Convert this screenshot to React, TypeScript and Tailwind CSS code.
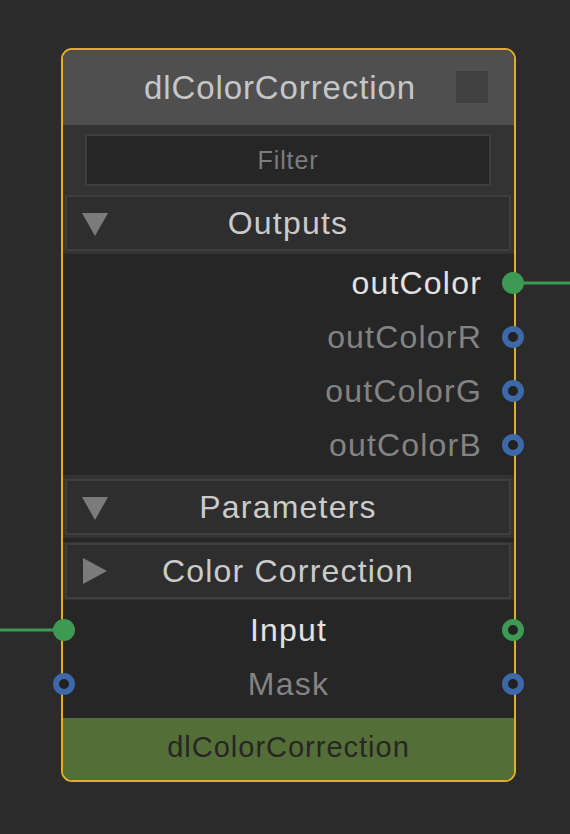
import React from "react";

type Port = "fill" | "ring-green" | "ring-blue" | null;

const FONT = { fontFamily: '"Liberation Sans", Arial, sans-serif' };

function Dot({ kind, side }: { kind: Port; side: "left" | "right" }) {
  if (!kind) return null;
  const pos = side === "left" ? "left-[-10px]" : "right-[-10px]";
  if (kind === "fill") {
    return <span className={`absolute ${pos} top-1/2 -translate-y-1/2 w-[22px] h-[22px] rounded-full bg-[#3d9a52] z-10`} />;
  }
  const ring = kind === "ring-green" ? "border-[#3d9a52]" : "border-[#3d68aa]";
  return (
    <span
      className={`absolute ${pos} top-1/2 -translate-y-1/2 w-[22px] h-[22px] rounded-full border-[6px] ${ring} bg-[#222222] z-10`}
    />
  );
}

function Section({ label, open }: { label: string; open: boolean }) {
  return (
    <div className="relative flex h-[56px] items-center justify-center border-2 border-[#3f3f3f] bg-[#2e2e2e]">
      <svg
        className="absolute left-[14px] top-1/2 -translate-y-1/2"
        width="28"
        height="28"
        viewBox="0 0 28 28"
      >
        {open ? (
          <polygon points="1,4 27,4 14,27" fill="#7b7b7b" />
        ) : (
          <polygon points="2,1 2,27 26,14" fill="#7b7b7b" />
        )}
      </svg>
      <span className="text-[32px] leading-none tracking-[1.2px] text-[#cbcbcb]">{label}</span>
    </div>
  );
}

function OutRow({ label, port, bright }: { label: string; port: Port; bright?: boolean }) {
  return (
    <div className="relative flex h-[54px] items-center justify-end pr-[32px]">
      <span className={`text-[32px] leading-none tracking-[1.2px] ${bright ? "text-[#e2e2e2]" : "text-[#838383]"}`}>
        {label}
      </span>
      {bright && <span className="absolute left-[calc(100%+8px)] top-1/2 -translate-y-1/2 h-[3px] w-[60px] bg-[#3d9a52]" />}
      <Dot kind={port} side="right" />
    </div>
  );
}

function InRow({ label, left, right, bright }: { label: string; left: Port; right: Port; bright?: boolean }) {
  return (
    <div className="relative flex h-[54px] items-center justify-center">
      <span className={`text-[32px] leading-none tracking-[1.2px] ${bright ? "text-[#e2e2e2]" : "text-[#838383]"}`}>
        {label}
      </span>
      {bright && <span className="absolute right-[calc(100%+8px)] top-1/2 -translate-y-1/2 h-[3px] w-[60px] bg-[#3d9a52]" />}
      <Dot kind={left} side="left" />
      <Dot kind={right} side="right" />
    </div>
  );
}

export default function App() {
  return (
    <div className="h-[834px] w-[570px] overflow-hidden bg-[#2b2b2b] pl-[61px] pt-[48px]" style={FONT}>
      <div className="w-[455px] rounded-[11px] border-2 border-[#e0ad2c]">
        <div className="relative flex h-[75px] items-center justify-center rounded-t-[9px] bg-[#4f4f4f] pr-[17px]">
          <span className="text-[33px] leading-none tracking-[0.9px] text-[#c6c6c6]">dlColorCorrection</span>
          <span className="absolute right-[26px] top-[21px] h-[32px] w-[32px] bg-[#414141]" />
        </div>

        <div className="h-[68px] bg-[#333333] pl-[22px] pr-[23px] pt-[9px]">
          <div className="flex h-[52px] items-center justify-center border-2 border-[#3e3e3e] bg-[#262626]">
            <span className="text-[25px] leading-none tracking-[0.9px] text-[#7c7c7c]">Filter</span>
          </div>
        </div>

        <div className="h-[61px] bg-[#333333] pl-[2px] pr-[3px] pt-[2px]">
          <Section label="Outputs" open />
        </div>

        <div className="bg-[#262626] pb-[3px] pt-[2px]">
          <OutRow label="outColor" port="fill" bright />
          <OutRow label="outColorR" port="ring-blue" />
          <OutRow label="outColorG" port="ring-blue" />
          <OutRow label="outColorB" port="ring-blue" />
        </div>

        <div className="bg-[#333333] pb-[3px] pl-[2px] pr-[3px] pt-[4px]">
          <Section label="Parameters" open />
        </div>
        <div className="h-[4px] bg-[#262626]" />
        <div className="bg-[#333333] pb-[1px] pl-[2px] pr-[3px] pt-[1px]">
          <Section label="Color Correction" open={false} />
        </div>

        <div className="bg-[#262626] pb-[7px] pt-[3px]">
          <InRow label="Input" left="fill" right="ring-green" bright />
          <InRow label="Mask" left="ring-blue" right="ring-blue" />
        </div>

        <div className="flex h-[62px] items-center justify-center rounded-b-[9px] bg-[#546e37] pb-[4px]">
          <span className="text-[29px] leading-none tracking-[1px] text-[#262626]">dlColorCorrection</span>
        </div>
      </div>
    </div>
  );
}
